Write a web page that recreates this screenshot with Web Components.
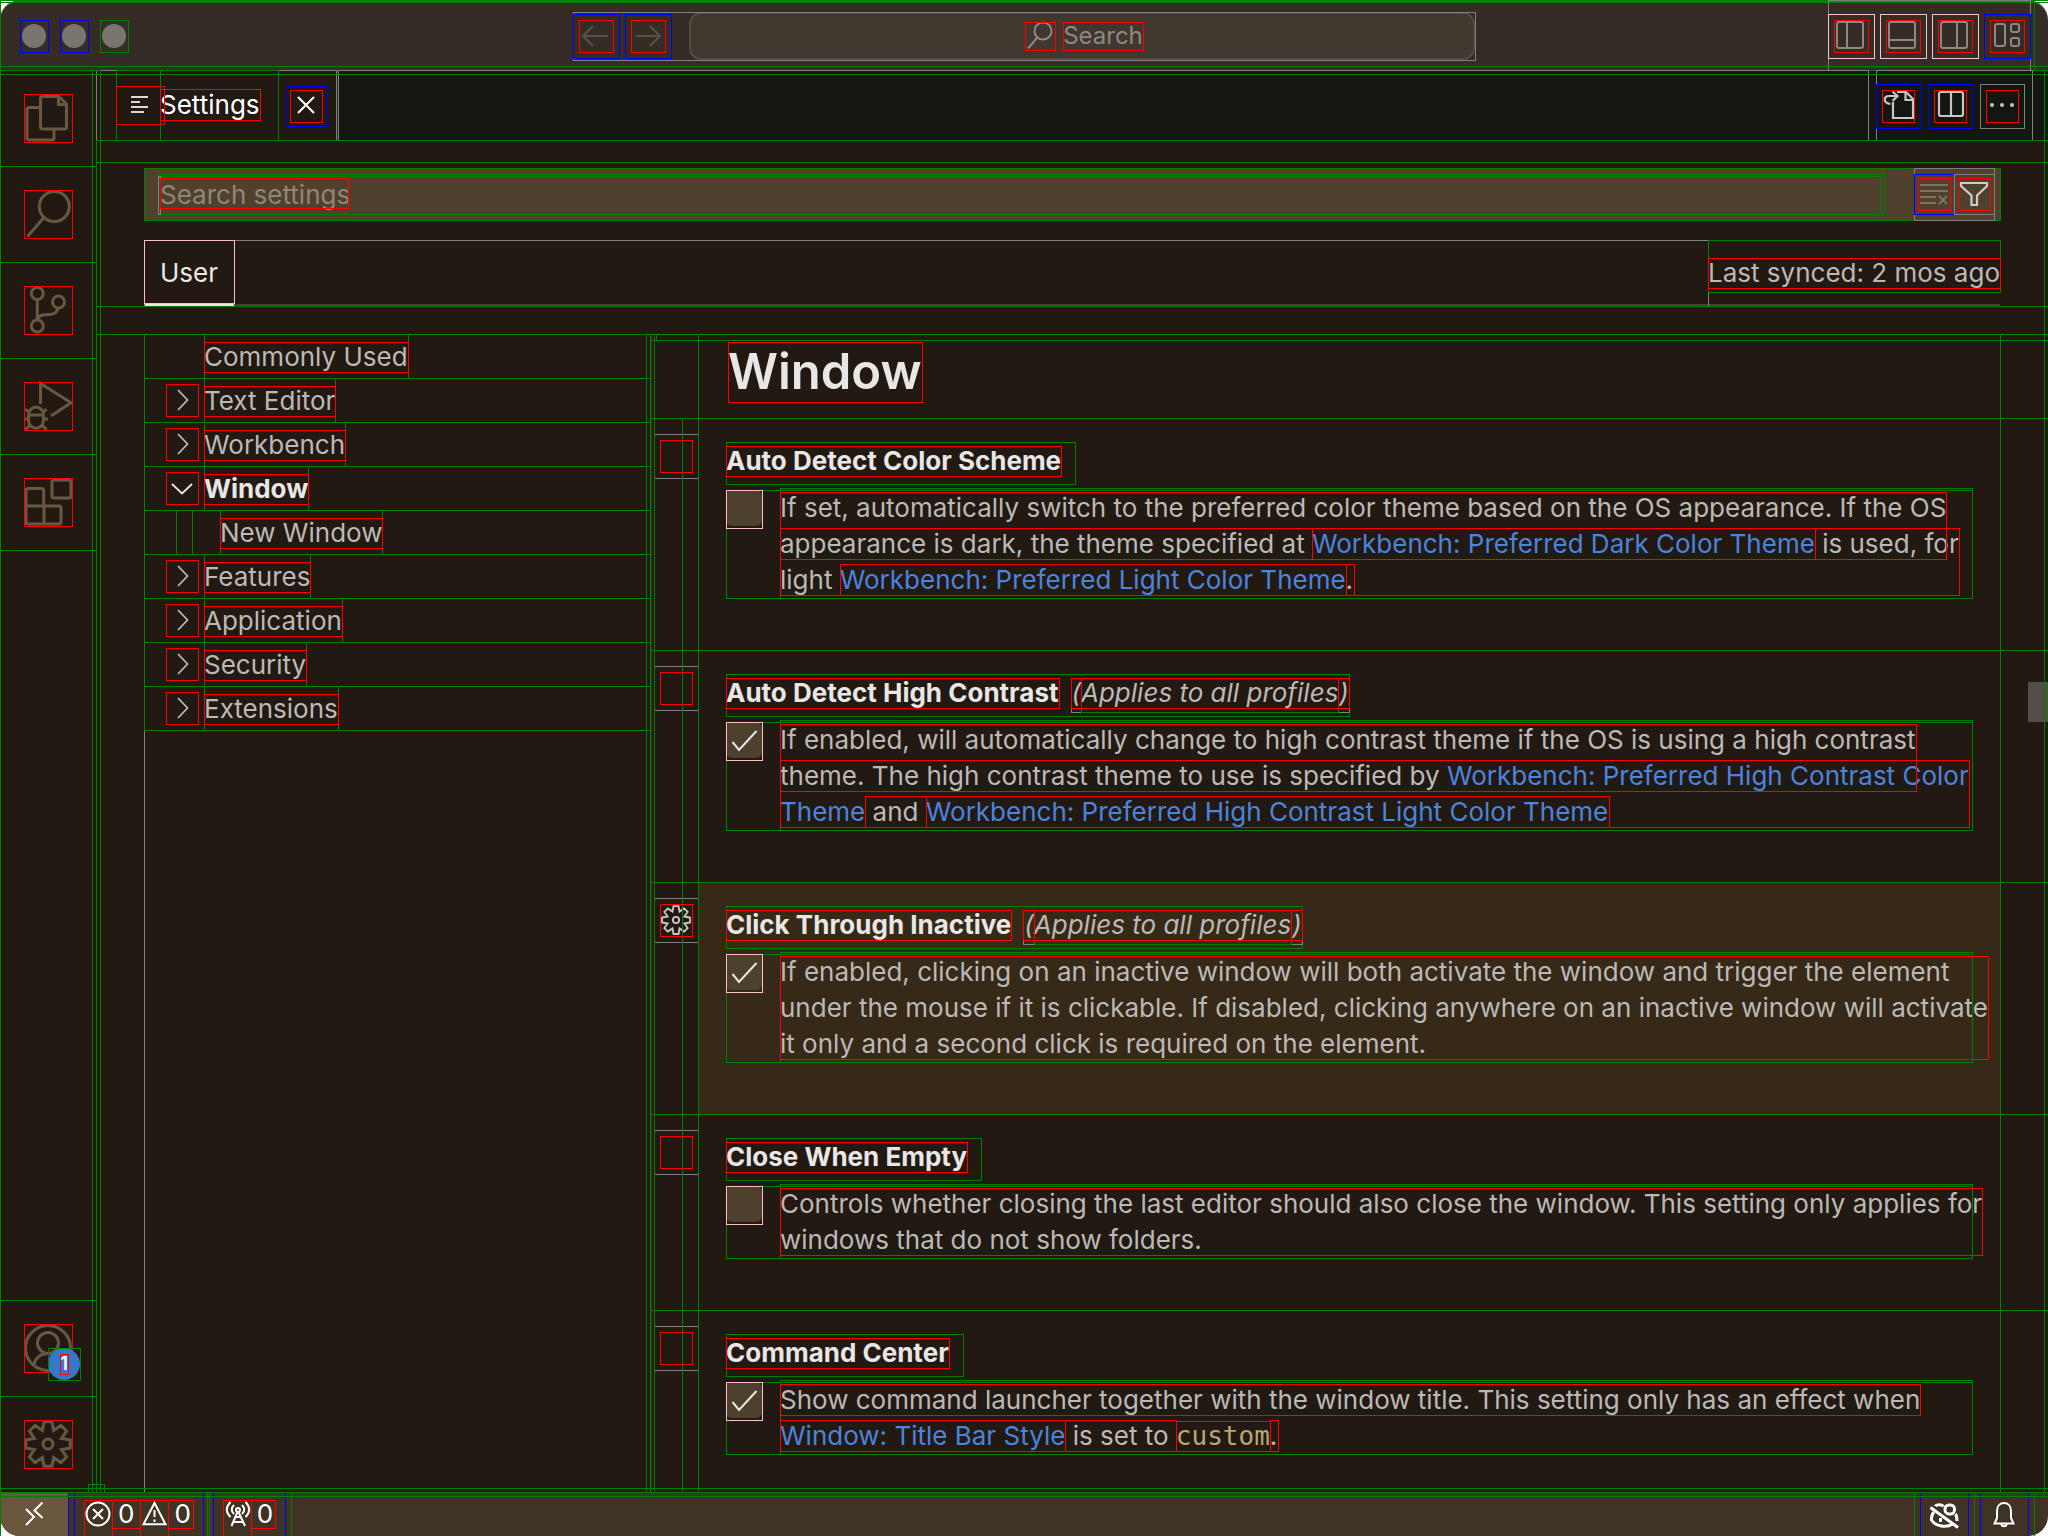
<!DOCTYPE html>
<html lang="en">
<head>
<meta charset="utf-8">
<title>Settings</title>
<style>
html,body{margin:0;height:100%;background:#fff;overflow:hidden}
body{font:26px/30px Inter,"Liberation Sans",sans-serif;color:#bbb9b7}
setting-item a{color:#4a84dd;text-decoration:none}
setting-item code{font:26px/30px "DejaVu Sans Mono",monospace;color:#baa673}
</style>
</head>
<body>
<ide-window>
  <title-bar slot="title"></title-bar>
  <activity-bar slot="activity"></activity-bar>
  <editor-tabs slot="tabs"></editor-tabs>
  <settings-header slot="header"></settings-header>
  <toc-list slot="toc">
    <toc-item label="Commonly Used" leaf></toc-item>
    <toc-item label="Text Editor"></toc-item>
    <toc-item label="Workbench"></toc-item>
    <toc-item label="Window" open></toc-item>
    <toc-item label="New Window" leaf nested></toc-item>
    <toc-item label="Features"></toc-item>
    <toc-item label="Application"></toc-item>
    <toc-item label="Security"></toc-item>
    <toc-item label="Extensions"></toc-item>
  </toc-list>
  <settings-list slot="list" heading="Window">
    <setting-item label="Auto Detect Color Scheme"><text-run>If set, automatically switch to the preferred color theme based on the OS appearance. If the OS<br>appearance is dark, the theme specified at </text-run><a href="#dark"><text-run>Workbench: Preferred Dark Color Theme</text-run></a><text-run> is used, for<br>light </text-run><a href="#light"><text-run>Workbench: Preferred Light Color Theme</text-run></a><text-run>.</text-run></setting-item>
    <setting-item label="Auto Detect High Contrast" scope="Applies to all profiles" checked><text-run>If enabled, will automatically change to high contrast theme if the OS is using a high contrast<br>theme. The high contrast theme to use is specified by </text-run><a href="#hc"><text-run>Workbench: Preferred High Contrast Color<br>Theme</text-run></a><text-run> and </text-run><a href="#hcl"><text-run>Workbench: Preferred High Contrast Light Color Theme</text-run></a></setting-item>
    <setting-item label="Click Through Inactive" scope="Applies to all profiles" checked active><text-run>If enabled, clicking on an inactive window will both activate the window and trigger the element<br>under the mouse if it is clickable. If disabled, clicking anywhere on an inactive window will activate<br>it only and a second click is required on the element.</text-run></setting-item>
    <setting-item label="Close When Empty"><text-run>Controls whether closing the last editor should also close the window. This setting only applies for<br>windows that do not show folders.</text-run></setting-item>
    <setting-item label="Command Center" checked><text-run>Show command launcher together with the window title. This setting only has an effect when</text-run><br><a href="#titlebar"><text-run>Window: Title Bar Style</text-run></a><text-run> is set to </text-run><code><text-run>custom</text-run></code><text-run>.</text-run></setting-item>
  </settings-list>
  <status-bar slot="status"></status-bar>
</ide-window>
<script>
/* Shared base: box reset and the one-pixel frames laid over boxes, inner frames above outer ones. */
const BASE = `
*{box-sizing:border-box}
button{font:inherit;color:inherit;background:none;border:0;padding:0;margin:0;text-align:left;display:block}
svg{display:block;fill:none;stroke:currentColor;overflow:visible}
.f{position:relative}
.f::before{content:"";position:absolute;inset:0 -1px -1px 0;border:1px solid #008000;pointer-events:none;z-index:2}
.r::before{border-color:#f00}.b::before{border-color:#00f}.g::before{border-color:#808080}.p::before{border-color:#ffc0cb}
.over,.f.over{position:absolute;pointer-events:none}
.vline{border-left:1px solid #008000;z-index:2}
.t{line-height:30px;white-space:pre}
`;
/* Eight-tooth gear outline centred in a 48-unit box. */
function gearPath(){
  let d='';
  const pt=(a,u,v)=>{const c=Math.cos(a),s=Math.sin(a);return (24+u*c+v*s).toFixed(2)+' '+(24+u*s-v*c).toFixed(2)};
  for(let k=0;k<8;k++){const a=k*Math.PI/4;
    d+=(k?'L':'M')+pt(a,-4,22.3)+'L'+pt(a,4,22.3)+'L'+pt(a+Math.PI/8,0,14.6);}
  return d+'Z';
}
const GEAR = `<path d="${gearPath()}"/><circle cx="24" cy="24" r="5"/>`;
const ICONS = {
  files:[48,48,3,'<path d="M18.5 2.5H35l7.5 7.5v23q0 2-2 2h-22q-2 0-2-2V4.500q0-2 2-2z"/><path d="M34.500 2.500v8h8M16 13.500H5q-2 0-2 2V44q0 2 2 2h23q2 0 2-2v-9"/>'],
  search:[48,48,3,'<circle cx="30.300" cy="16.500" r="15"/><path d="M20 27.500 3.500 46.500"/>'],
  scm:[48,48,3,'<circle cx="13.300" cy="7.500" r="6"/><circle cx="34.500" cy="16" r="6"/><circle cx="13.300" cy="40" r="6"/><path d="M13.300 13.500V34M34 22c-1 5-5 6.500-9 6.500-7 0-11 1-11.500 6"/>'],
  debug:[48,48,3,'<path d="M16.500 22V1.500L47 20.700 27 34"/><path d="M4.500 34c0-12 15-12 15 0v4c0 11-15 11-15 0zM4.500 33h15M1.500 27l4 4M22.500 27l-4 4M0 37h4M24 37h-4M1.500 47.500l5-5M22.500 47.500l-5-5"/>'],
  ext:[48,48,3,'<rect x="28" y="2" width="19" height="18" rx="2"/><path d="M19.700 28V12.500q0-2-2-2H4q-2 0-2 2V44q0 2 2 2h31q2 0 2-2V30q0-2-2-2zM2 28h18v18"/>'],
  account:[48,48,3,'<circle cx="24" cy="24" r="22.500"/><circle cx="24" cy="19" r="10.500"/><path d="M9.500 41C12 33 17 29.500 24 29.500S36 33 38.500 41"/>'],
  gear:[48,48,3,GEAR],
  gearSmall:[32,32,3,`<g transform="translate(1 1) scale(.625)">${GEAR}</g>`],
  left:[34,32,2,'<path d="M4 16h25M14 6 4 16l10 10"/>'],
  right:[34,32,2,'<path d="M5 16h24M19 6l10 10-10 10"/>'],
  find:[30,28,2,'<circle cx="18" cy="9" r="8.500"/><path d="M12.300 15.500 3 26.500"/>'],
  panelL:[34,32,2,'<rect x="3" y="2" width="26" height="26" rx="2"/><path d="M13 2v26"/>'],
  panelB:[34,32,2,'<rect x="3" y="2" width="26" height="26" rx="2"/><path d="M3 20h26"/>'],
  panelR:[34,32,2,'<rect x="3" y="2" width="26" height="26" rx="2"/><path d="M19 2v26"/>'],
  layout:[34,32,2,'<rect x="5" y="4" width="10" height="22" rx="2"/><rect x="21" y="4" width="8" height="8" rx="2"/><rect x="21" y="18" width="8" height="8" rx="2"/>'],
  lines:[48,38,2,'<path d="M15 11h17M15 16h9M15 21h17M15 26h13"/>'],
  close:[32,32,2,'<path d="m8 7 16 16M24 7 8 23"/>'],
  gotoFile:[32,32,2.200,'<path d="M11 12v16h20V9l-7-7h-9M23.500 2v8H31M8.500 14C1 13 1 6 7 6h8M10.500 1.500 15.500 6l-5 5"/>'],
  split:[32,32,2.200,'<rect x="5" y="2" width="24" height="24" rx="2"/><path d="M17 2v24"/>'],
  dots:[32,32,0,'<g fill="currentColor" stroke="none"><circle cx="6" cy="15" r="2"/><circle cx="16" cy="15" r="2"/><circle cx="26" cy="15" r="2"/></g>'],
  clear:[32,32,2,'<path d="M2 7h28M2 13h28M2 19h16M2 25h16M21 18l8 8M29 18l-8 8"/>'],
  filter:[32,32,2.200,'<path d="M3 5h26v3L19 17.500V27h-5.500v-9.500L3 8z"/>'],
  chevR:[32,32,1.800,'<path d="m12 6 9.500 10L12 26"/>'],
  chevD:[32,32,1.800,'<path d="m6 12 10 9.500L26 12"/>'],
  check:[36,36,2,'<path d="m6.500 20 6.500 8L30.500 9"/>'],
  error:[28,28,2,'<circle cx="14" cy="14" r="11.500"/><path d="m9 9 10 10M19 9 9 19"/>'],
  warn:[28,28,2,'<path d="M14.500 3 3.500 24.300h22zM14.500 10v7M14.500 19.500v2.500"/>'],
  tower:[28,28,2,'<circle cx="15" cy="10" r="2"/><path d="M14.500 12 8.500 26M15.500 12l6.500 14M12.500 17h5M11 22h8.500M11 14c-3-3-3-6 0-9M19 14c3-3 3-6 0-9M7.500 17c-5-5-5-10 0-15M22.500 17c5-5 5-10 0-15"/>'],
  remote:[68,44,2,'<path d="m26 17 8 8-8 8M42.500 10.500l-8 8 8 7.500"/>'],
  copilot:[48,44,3,'<path d="M15 14.500c1.500-2.500 7-2.500 8.500 0"/><rect x="25" y="13" width="9.500" height="9" rx="4"/><path d="M14 20c-3 3-2.500 5-2.500 8 4 6.500 15 8 21 4M35.500 22c1.500 2 1.500 4 1.500 7M20.500 26v4"/><path d="M13 14.500 39 34" stroke="#3f3325" stroke-width="3"/><path d="M10.500 15.500 38 35.500"/>'],
  bell:[48,44,2,'<path d="M14.500 31.500h19L31 26v-7c0-5-3-8-7-8s-7 3-7 8v7zM21.500 32c0 3 5 3 5 0"/>'],
};
const icon = n => {const [w,h,s,d]=ICONS[n];return `<svg width="${w}" height="${h}" viewBox="0 0 ${w} ${h}" stroke-width="${s}" aria-hidden="true">${d}</svg>`};
const ic = n => `<span class="f r ic">${icon(n)}</span>`;
const define = (name, css, html, after) => customElements.define(name, class extends HTMLElement{
  constructor(){super();this.attachShadow({mode:'open'})}
  connectedCallback(){
    this.shadowRoot.innerHTML=`<style>${BASE}${css}</style>${typeof html==='function'?html(this):html}`;
    if(after) after(this);
  }
});

define('ide-window',`
:host{display:block;height:100vh;min-width:1200px}
.win{height:100%;display:grid;grid-template-rows:70px minmax(0,1fr) 44px;overflow:hidden}
.mid{display:grid;grid-template-columns:96px minmax(0,1fr);background:#221a12}
.ed{display:flex;flex-direction:column;min-height:0;min-width:0}
.body{flex:1;display:grid;grid-template-columns:554px minmax(0,1fr);min-height:0;overflow:hidden}
.sash-top{left:-1px;right:-1px;top:-4px;height:8px}
.sash-bottom{left:-1px;right:-1px;bottom:-4px;height:8px;z-index:4}
.sash-left{left:92px;top:0;bottom:0;width:8px}
.corner{left:88px;bottom:0;width:16px;height:8px}
.edge{right:3px;top:0;bottom:0}
.sash-toc{left:550px;top:0;bottom:0;width:8px;z-index:3}
.shade{left:554px;top:0;height:6px;right:-1px}
.shade i{display:block;width:6px;height:6px}
`,`<div class="win f">
<slot name="title"></slot>
<div class="mid f"><slot name="activity"></slot>
 <div class="ed f"><slot name="tabs"></slot><slot name="header"></slot>
  <div class="body f"><slot name="toc"></slot><slot name="list"></slot>
   <div class="over f sash-toc"></div><div class="over f shade"><i class="f"></i></div></div></div>
 <div class="over f sash-top"></div><div class="over f sash-bottom"></div><div class="over f sash-left"></div><div class="over f corner"></div><div class="over vline edge"></div>
</div>
<slot name="status"></slot></div>`);

define('title-bar',`
:host{display:block;color:#8d8883}
.bar{height:70px;display:grid;grid-template-columns:1fr 44% 1fr;background:#352d25;border-radius:20px 20px 0 0;border-top:2px solid #5d554d}
.lights{display:flex;gap:12px;padding:18px 20px}
.lights button{width:28px;height:32px;display:grid;place-items:center}
.lights i{width:24px;height:24px;border-radius:50%;background:#7a756f}
.mid{display:flex;height:48px;margin-top:10px;gap:6px}
.nav{width:46px;height:44px;margin-top:2px;display:grid;place-items:center;color:#5a5149}
.box{flex:1;height:48px;margin-left:12px;border:2px solid #544b42;border-radius:12px;background:#40372f;display:flex;align-items:center;justify-content:center;gap:8px;min-width:0;font-size:24px;padding-left:4px}
.box .t{line-height:28px}
.right{display:flex;justify-self:end;gap:6px;height:70px;margin:-2px 18px 0 0;padding-top:14px}
.right button{width:46px;height:44px;display:grid;place-items:center}
.edge{right:13px;top:-2px;bottom:0}
`,`<div class="bar f">
<div class="lights"><button class="f b" aria-label="Close"><i></i></button><button class="f b" aria-label="Minimize"><i></i></button><button class="f" aria-label="Zoom"><i></i></button></div>
<div class="mid f g"><button class="nav f b" aria-label="Back">${ic('left')}</button><button class="nav f b" aria-label="Forward">${ic('right')}</button>
<button class="box">${ic('find')}<span class="t f r">Search</span></button></div>
<div class="right f g"><button class="f p" aria-label="Primary side bar">${ic('panelL')}</button><button class="f p" aria-label="Panel">${ic('panelB')}</button><button class="f p" aria-label="Secondary side bar">${ic('panelR')}</button><button class="f b" aria-label="Customize layout">${ic('layout')}</button></div>
<i class="over vline edge"></i></div>`);

define('activity-bar',`
:host{display:flex;flex-direction:column;justify-content:space-between;color:#685842;height:100%;min-height:0}
button{width:96px;height:96px;display:grid;place-items:center}
.badge{position:absolute;left:48px;top:48px;width:32px;height:32px;border-radius:50%;background:#3577c9;color:#fff;font:600 18px/20px Inter,sans-serif;display:grid;place-items:center;z-index:3}
.badge .t{line-height:20px}
`,`<nav>${['files','search','scm','debug','ext'].map((n,i)=>`<button class="f" aria-label="${['Explorer','Search','Source control','Run and debug','Extensions'][i]}">${ic(n)}</button>`).join('')}</nav>
<nav><button class="f" aria-label="Accounts">${ic('account')}<span class="badge f"><span class="t f r">1</span></span></button><button class="f" aria-label="Manage">${ic('gear')}</button></nav>`);

define('editor-tabs',`
:host{display:block}
.bar{height:70px;display:flex;background:#141611}
.tab{display:flex;background:#221a12;color:#fff;border-right:2px solid #2b2620;padding-left:20px;height:70px}
.ico{width:44px;padding-top:16px;color:#d8d8d8}
.ico .ic{display:block;width:48px}
.name{padding:20px 18px 0 0}
.x{width:58px;padding:16px 8px 0}
.x button{width:40px;height:40px;display:grid;place-items:center}
.fill{flex:1}
.acts{display:flex;gap:8px;padding:14px 8px 0 0;margin:0 16px 0 8px;color:#c6c6c4}
.acts button{width:44px;height:44px;display:grid;place-items:center}
`,`<div class="bar f"><div class="tab f g"><div class="ico f">${ic('lines')}</div><div class="name f"><span class="t f r">Settings</span></div><div class="x"><button class="f b" aria-label="Close tab">${ic('close')}</button></div></div>
<div class="fill f g"></div>
<div class="acts f g"><button class="f b" aria-label="Open settings file">${ic('gotoFile')}</button><button class="f b" aria-label="Split editor">${ic('split')}</button><button class="f g" aria-label="More actions">${ic('dots')}</button></div></div>`);

define('settings-header',`
:host{display:block}
.crumb{height:22px}
.top{padding:6px 48px 0;height:144px}
.search{display:flex;height:52px;background:#4f412e;padding:6px 6px 6px 14px}
.wrap{flex:1;margin-right:30px;height:40px;position:relative}
.wrap input{width:100%;height:40px;border:0;outline:0;background:none;padding:0 0 0 2px;font:inherit;color:#ccc;display:block}
.wrap input::placeholder{color:#8f8678;opacity:1}
.ph{left:2px;top:4px;width:188px;height:30px}
.in{left:0;top:2px;right:4px;bottom:0}
.caret{left:0;top:2px;width:2px;bottom:0}
.tools{display:flex;margin:-6px 0;padding:6px 0}
.tools button{width:40px;height:40px;display:grid;place-items:center}
.tools .dim{color:#7e725f}.tools .on{color:#d0cdc8}
.tabs{display:flex;margin-top:20px;height:66px;border-bottom:2px solid #443c38}
.scope{flex:1;height:66px}
.user{width:90px;height:66px;color:#e9e8e6;padding-top:2px;border-bottom:3px solid #e9e8e6;text-align:center}
.sync{height:52px;padding-top:18px}
.gap{height:28px}
`,`<div class="crumb f"></div><div class="top f">
<div class="search f"><div class="wrap f"><input type="text" placeholder="Search settings" aria-label="Search settings"><i class="over f in"></i><i class="over f g caret"></i><i class="over f r ph"></i></div>
<div class="tools f g"><button class="f b dim" aria-label="Clear search">${ic('clear')}</button><button class="f g on" aria-label="Filter">${ic('filter')}</button></div></div>
<div class="tabs"><div class="scope f g"><button class="user f p">User</button></div><div class="sync f"><div class="t f r">Last synced: 2 mos ago</div></div></div>
</div><div class="gap f"></div>`);

define('toc-list',`
:host{display:block;padding-left:48px;min-height:0}
.list{height:100%}
`,`<div class="list f g"><slot></slot></div>`);

define('toc-item',`
:host{display:block}
.item{display:flex;width:100%;height:44px}
.tw{width:60px;padding:6px 5px 0 22px}
.tw .ic{display:block;width:32px}
.lab{height:44px;padding-top:8px}
.lab .t{display:block}
:host([open]){color:#e8e7e5;font-weight:700}
.ind{width:16px;height:44px;margin-left:32px;margin-right:28px}
`,el=>`<button class="item f">${el.hasAttribute('nested')?'<span class="ind f"></span>':`<span class="tw">${el.hasAttribute('leaf')?'':ic(el.hasAttribute('open')?'chevD':'chevR')}</span>`}<span class="lab f"><span class="t f r">${el.getAttribute('label')}</span></span></button>`);

define('settings-list',`
:host{display:block;min-width:0;min-height:0;position:relative}
.box{height:100%;border-left:2px solid #37322b;padding-left:2px;background:#221a12}
.head{display:flex;height:84px;margin-left:-4px;padding-left:4px}
.head::before{top:6px}
.gut{width:44px}
.main{flex:1;margin-right:48px;padding:8px 30px}
h1{margin:0;font-size:49px;line-height:60px;font-weight:600;color:#e8e7e5;display:inline-block}
.thumb{right:0;top:348px;width:20px;height:40px;background:#524f4b}
`,el=>`<div class="box"><div class="head f"><div class="gut f"></div><div class="main f"><h1 class="f r">${el.getAttribute('heading')}</h1></div></div><slot></slot></div><div class="over thumb"></div>`);

let uid=0;
define('setting-item',`
:host{display:block}
.item{display:flex;margin-left:-4px;padding-left:4px}
.gut{width:44px;padding-top:16px}
.gut .vline{left:28px;top:0;bottom:0;z-index:3}
.gear{width:44px;height:44px;display:grid;place-items:center;color:#c9c8c6}
.gear .ic{width:32px;height:32px}
.main{flex:1;margin-right:48px;padding:24px 28px 52px;min-width:0}
:host([active]) .main{background:#362918}
.title{display:inline-flex;height:42px;padding:4px 14px 0 0;vertical-align:top}
.title.scoped{padding-right:0}
label{color:#e8e7e5;font-weight:700;height:30px}
.scope{display:flex;font-style:italic;height:34px;margin-left:12px}
.mid{height:34px;display:block}
.mid .t{display:block}
.scope>.t{height:30px;display:block;padding-left:1px}
.row2{display:flex;margin-top:6px;min-height:40px}
.cb{width:36px;height:38px;flex:none;color:#e8e7e5}
.cb input{appearance:none;margin:0;width:36px;height:36px;border-radius:6px;background:#4d412e;display:block}
.cb svg{position:absolute;left:0;top:0}
.desc{flex:1;margin:-2px 0 0 18px;padding-top:2px;line-height:36px;white-space:nowrap;min-width:0}
.fr{position:absolute;border:1px solid #f00;pointer-events:none;z-index:2}
`,el=>{const id='s'+(++uid),sc=el.getAttribute('scope');return `<div class="item f"><div class="gut f"><button class="gear f g" aria-label="More actions"><span class="f r ic">${el.hasAttribute('active')?icon('gearSmall'):''}</span></button><i class="over vline"></i></div>
<div class="main f"><div class="title f${sc?' scoped':''}"><label for="${id}" class="t f r">${el.getAttribute('label')}</label>${sc?`<span class="scope f g"><span class="t f r">(</span><span class="mid f"><span class="t f r">${sc}</span></span><span class="t f r">)</span></span>`:''}</div>
<div class="row2 f"><span class="cb f p"><input type="checkbox" id="${id}"${el.hasAttribute('checked')?' checked':''}>${el.hasAttribute('checked')?icon('check'):''}</span><div class="desc f"><slot></slot></div></div></div></div>`},
el=>{
  /* Frame every text run with the union of the lines it covers. */
  const desc=el.shadowRoot.querySelector('.desc');
  const draw=()=>{
    desc.querySelectorAll('.fr').forEach(n=>n.remove());
    const o=desc.getBoundingClientRect();
    el.querySelectorAll('text-run').forEach(run=>{
      const b=run.getBoundingClientRect(), n=document.createElement('i');
      n.className='fr';
      n.style.left=Math.round(b.left-o.left)+'px'; n.style.top=Math.round(b.top-o.top)+'px';
      n.style.width=Math.round(b.width)+1+'px'; n.style.height=Math.round(b.height)+1+'px';
      desc.append(n);
    });
  };
  new ResizeObserver(draw).observe(desc);
});
define('text-run',':host{display:inline}','<slot></slot>');

define('status-bar',`
:host{display:block;color:#fff;position:relative;z-index:1}
.bar{height:44px;display:flex;background:#3f3325;border-radius:0 0 20px 20px}
.rem{width:68px;height:44px;background:#6a583e;border-radius:0 0 0 20px;margin-right:6px}
.it{height:44px;display:flex;padding:8px 10px 0}
.it .t{line-height:28px;height:28px;padding:0 6px}
.it .t:last-child{padding-right:2px}
.sp{width:2px;margin:0 4px}
.grow{flex:1;margin:0 6px}
.ico{width:48px;height:44px}
.thin{width:6px;margin-left:6px}
.edge{width:14px;margin-left:6px}
`,`<div class="bar f"><button class="rem f b" aria-label="Remote">${icon('remote')}</button>
<button class="it f b">${ic('error')}<span class="t f r">0</span>${ic('warn')}<span class="t f r">0</span></button><i class="sp f"></i>
<button class="it f b">${ic('tower')}<span class="t f r">0</span></button><i class="grow f"></i>
<button class="ico f b" aria-label="Copilot">${icon('copilot')}</button><i class="thin f"></i><button class="ico f b" aria-label="Notifications">${icon('bell')}</button><i class="edge f"></i></div>`);
</script>
</body>
</html>
